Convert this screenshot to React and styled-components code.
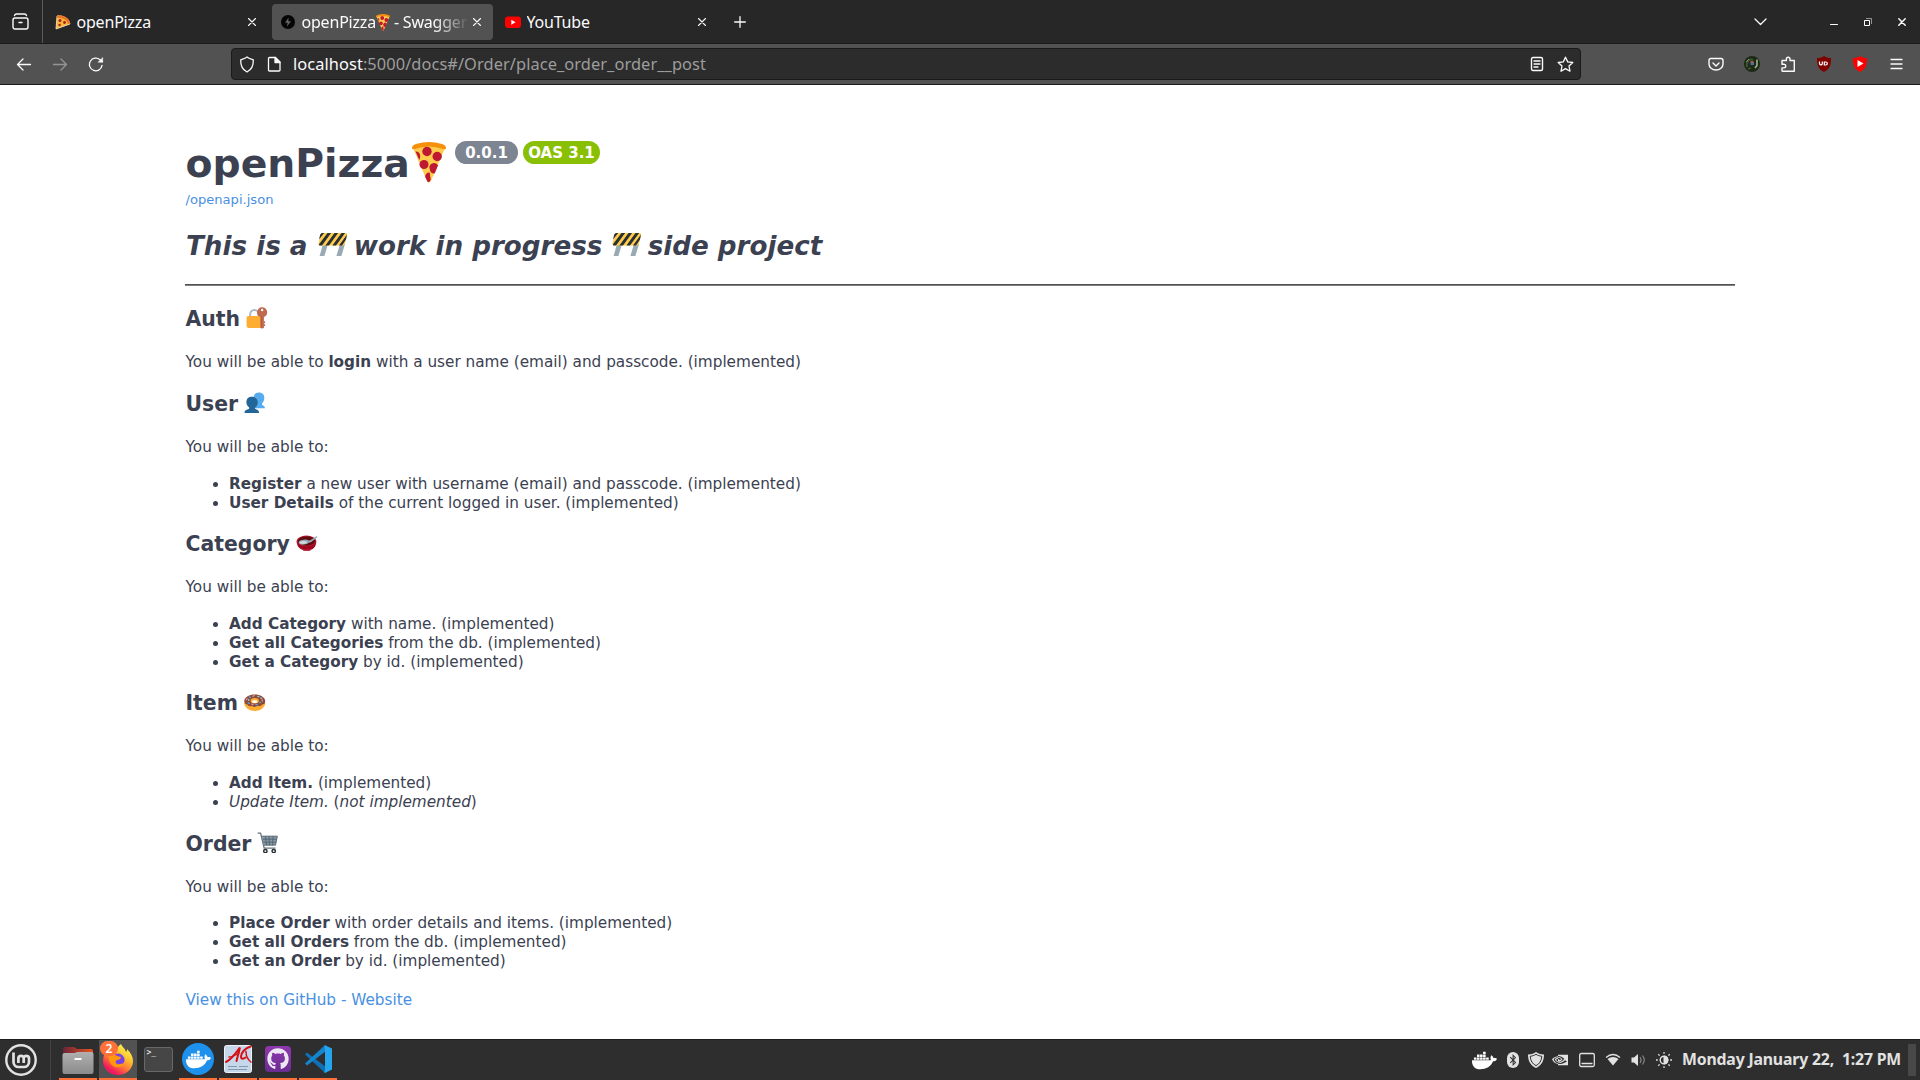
import React from "react";
import styled, { createGlobalStyle } from "styled-components";
import { FaDocker, FaGithub, FaBluetoothB } from "react-icons/fa";
import { SiNvidia } from "react-icons/si";

const Global = createGlobalStyle`
  *, *::before, *::after { box-sizing: border-box; }
  html, body { margin: 0; padding: 0; background: #fff; overflow: hidden; }
  svg { display: block; flex: none; }
`;

const uiFont = `"Noto Sans", "Open Sans", sans-serif`;

const Screen = styled.div`
  width: 1920px;
  height: 1080px;
  display: flex;
  flex-direction: column;
  background: #fff;
  overflow: hidden;
`;

/* ---------- Browser chrome ---------- */
const TabBar = styled.header`
  height: 44px;
  flex: none;
  display: flex;
  background: #272727;
  border-bottom: 1px solid #1b1b1b;
  color: #fbfbfe;
  font-family: ${uiFont};
`;

const ViewButton = styled.div`
  width: 43px;
  padding: 0 2px 0 0;
  border-right: 1px solid #5a5a5a;
  display: flex;
  align-items: center;
  justify-content: center;
  margin-right: 2px;
`;

const Tab = styled.div`
  width: 221px;
  height: 36px;
  margin: 4px 2px 0;
  padding: 0 8px;
  border-radius: 4px;
  display: flex;
  align-items: center;
  background: ${(p) => (p.$active ? "#525252" : "transparent")};
`;

const TabLabel = styled.span`
  flex: 1;
  margin-left: 5.5px;
  font-size: 16px;
  letter-spacing: -0.2px;
  line-height: 36px;
  white-space: pre;
  overflow: hidden;
  display: flex;
  align-items: center;
  ${(p) => p.$fade && "mask-image: linear-gradient(to right, #000 132px, transparent 168px);"}
`;

const CloseSlot = styled.span`
  width: 16px;
  display: flex;
  justify-content: center;
`;

const NewTab = styled.div`
  width: 39px;
  display: flex;
  align-items: center;
  justify-content: center;
`;

const WindowControls = styled.div`
  margin-left: auto;
  display: flex;
  align-items: center;
  padding-right: 1px;
`;

const ControlSlot = styled.div`
  width: 34px;
  margin-right: ${(p) => p.$after || 0}px;
  display: flex;
  justify-content: center;
`;

const NavBar = styled.nav`
  height: 41px;
  flex: none;
  display: flex;
  align-items: center;
  padding: 0 6px;
  background: #525252;
  border-bottom: 1px solid #1b1b1b;
  color: #fbfbfe;
`;

const NavButton = styled.div`
  width: 36px;
  display: flex;
  justify-content: center;
  opacity: ${(p) => (p.$dim ? 0.4 : 1)};
`;

const UrlBox = styled.div`
  width: 1350px;
  height: 32px;
  margin-left: 117px;
  margin-right: auto;
  padding: 0 1px 0 7px;
  display: flex;
  align-items: center;
  background: #2c2c2c;
  border: 1px solid #1a1a1a;
  border-radius: 4px;
`;

const UrlText = styled.span`
  flex: 1;
  margin-left: 5px;
  font-family: ${uiFont};
  font-size: 16.4px;
  letter-spacing: 0.07px;
  line-height: 30px;
  color: #9d9d9d;
  white-space: pre;
`;

const Host = styled.span`
  color: #fbfbfe;
`;

const UrlIcon = styled.span`
  width: 28px;
  margin-left: ${(p) => p.$left || 0}px;
  display: flex;
  justify-content: center;
`;

/* ---------- Document ---------- */
const Page = styled.main`
  flex: 1;
  padding: 53px 185px 0;
  font-family: "DejaVu Sans", sans-serif;
  font-size: 15.28px;
  color: #3b4151;
`;

const TextColumn = styled.div`
  padding-left: 0.5px;
`;

const TitleRow = styled.div`
  display: flex;
  align-items: flex-start;
  height: 53px;
`;

const Title = styled.h1`
  margin: 0;
  width: 225px;
  font-size: 39.3px;
  line-height: 52px;
  font-weight: 700;
`;

const TitleEmoji = styled.span`
  margin: 4px 9px 0 1.5px;
`;

const Badge = styled.span`
  height: 23px;
  width: ${(p) => p.$width}px;
  margin: 3px 5px 0 0;
  border-radius: 12px;
  background: ${(p) => p.$color};
  color: #fff;
  font-size: 15px;
  font-weight: 700;
  line-height: 24px;
  text-align: center;
  white-space: nowrap;
`;

const SpecLink = styled.a`
  display: block;
  font-size: 13.1px;
  line-height: 18px;
  color: #4990e2;
`;

const Tagline = styled.h2`
  margin: 21px 0 0;
  padding-left: 0.5px;
  height: 32px;
  display: flex;
  font-size: 26.2px;
  line-height: 32px;
  font-style: italic;
  font-weight: 700;
  white-space: pre;
`;

const TagEmoji = styled.span`
  margin: 3px -4px 0 ${(p) => p.$left}px;
`;

const Rule = styled.hr`
  margin: 22px 0 21px;
  height: 2px;
  border: 0;
  border-top: 1px solid #505050;
  border-bottom: 1px solid #808080;
`;

const SectionTitle = styled.h3`
  margin: 0 0 22px;
  height: 24px;
  display: flex;
  font-size: 20.4px;
  line-height: 24px;
  font-weight: 700;
  white-space: pre;

  svg { margin-left: -1px; }
`;

const Para = styled.p`
  margin: 0 0 ${(p) => (p.$list ? 17.5 : 20)}px;
  line-height: 19px;
`;

const List = styled.ul`
  margin: 0 0 19.7px;
  padding: 0 0 0 43.5px;
  line-height: 19px;
`;

const Footer = styled.a`
  display: block;
  line-height: 19px;
  margin-top: 1px;
  color: #4990e2;
`;

/* ---------- Desktop panel ---------- */
const Panel = styled.footer`
  height: 41px;
  flex: none;
  display: flex;
  align-items: stretch;
  background: #2e2e2e;
  border-top: 1px solid #1c1c1c;
  font-family: ${uiFont};
  color: #e2e2e2;
`;

const MenuSlot = styled.div`
  width: 51px;
  padding-left: 5px;
  margin-right: 8px;
  border-right: 1px solid #444;
  display: flex;
  align-items: center;
`;

const Task = styled.div`
  position: relative;
  width: 38px;
  margin-right: 2px;
  padding-top: ${(p) => (p.$low ? 2 : 0)}px;
  display: flex;
  align-items: center;
  justify-content: center;
  background: ${(p) => (p.$active ? "#525252" : "transparent")};
  border-bottom: 2px solid ${(p) => (p.$running ? "#ff7139" : "transparent")};
`;

const Count = styled.span`
  position: absolute;
  left: 1px;
  top: 1px;
  width: 18px;
  height: 15px;
  border-radius: 8px;
  background: #ff7139;
  color: #fff;
  font-size: 12px;
  font-weight: 600;
  line-height: 15px;
  text-align: center;
`;

const TerminalBox = styled.div`
  width: 29px;
  height: 25px;
  border-radius: 3px;
  border: 1px solid #686868;
  background: #464646;
  color: #fff;
  padding-left: 2px;
  font-family: "DejaVu Sans Mono", monospace;
  font-size: 8px;
  line-height: 10px;
`;

const Tray = styled.div`
  margin-left: auto;
  display: flex;
  align-items: center;
`;

const TraySlot = styled.span`
  width: ${(p) => p.$w}px;
  display: flex;
  justify-content: center;
`;

const Clock = styled.span`
  width: 218px;
  margin: 0 8px 0 5px;
  padding-bottom: 1px;
  text-align: right;
  font-size: 15.8px;
  font-weight: 700;
  letter-spacing: -0.17px;
  line-height: 37px;
  white-space: pre;
`;

const DesktopEdge = styled.span`
  width: 8px;
  height: 32px;
  margin-right: 4px;
  background: #484848;
`;

/* ---------- Drawings ---------- */
const Line = ({ w = 16, h = 16, box = "0 0 16 16", sw = 1.3, children }) => (
  <svg width={w} height={h} viewBox={box} fill="none" stroke="currentColor" strokeWidth={sw} strokeLinecap="round" strokeLinejoin="round">
    {children}
  </svg>
);

const CloseIcon = () => (
  <Line w={8} h={8} box="0 0 8 8" sw={1.1}><path d="M.5 .5l7 7M7.500 .5l-7 7" /></Line>
);

const PizzaEmoji = ({ w, h }) => (
  <svg width={w} height={h} viewBox="0 0 34 41">
    <path d="M1 6 Q17 0 33 6 L19 39 Q17 42 15 39Z" fill="#ffcc4d" />
    <g fill="#be1931">
      <circle cx="15" cy="9.500" r="4.700" />
      <circle cx="25.200" cy="14.500" r="4.700" />
      <circle cx="12" cy="22.500" r="4.500" />
      <path d="M3.500 9.500c4-.5 6 4 3.800 8.500zM26 23.500l-3.300 8a4.500 4.500 0 0 1-4.800-4 4.500 4.500 0 0 1 8.100-4zM13.200 35a4 4 0 0 1 4.500-4.500l1 7.500-1.500 2h-1.500z" />
    </g>
    <path d="M0 6 Q0 3 4 2 Q17-2 30 2 Q34 3 34 6 Q34 8 31 7 Q17 2 3 7 Q0 8 0 6Z" fill="#f4900c" />
  </svg>
);

const SliceFavicon = () => (
  <svg width="16" height="16" viewBox="0 0 16 16">
    <path d="M2 2C8 1 14 5 15 10L1 15Z" fill="#ffb636" stroke="#f7e8d0" strokeWidth=".8" />
    <path d="M2 1.500C8 0 15 4 15.200 9.500L13 10C12 6 8 3.400 2.200 4Z" fill="#e8762b" />
    <circle cx="5" cy="6.500" r="1.500" fill="#a3202a" />
    <circle cx="9.500" cy="8.500" r="1.400" fill="#a3202a" />
    <circle cx="4.600" cy="11" r="1.300" fill="#a3202a" />
  </svg>
);

const BarrierEmoji = () => (
  <svg width="31" height="26" viewBox="0 0 31 26">
    <path d="M5 11h5l-3.600 12H1.600zM22 11h5l-3.600 12H18.400z" fill="#9aaab4" />
    <path d="M4.100 0H27.500q2 0 1.500 2L27 10.500q-.5 2-2.500 2H2q-2 0-1.500-2L2.600 2q.5-2 1.500-2z" fill="#ffcc4d" />
    <g fill="#292f33">
      <path d="M3.800 0h2.400L1 6.500 2.200 1.500zM9.500 0h3.600L4 12.500H1.500L.8 11.500zM16.500 0h3.600L11 12.500H7.400zM23.500 0h3.600L18 12.500h-3.600zM29 1.500L28 6.500l-4 6h-3z" />
    </g>
  </svg>
);

const Emoji36 = ({ children }) => (
  <svg width="21.500" height="21.500" viewBox="0 0 36 36">{children}</svg>
);

const LockEmoji = () => (
  <Emoji36>
    <path d="M7 16v-4a7 7 0 0 1 14 0v4" fill="none" stroke="#aab8c2" strokeWidth="3.400" />
    <rect x="1" y="15" width="25" height="20" rx="3" fill="#ffac33" />
    <circle cx="27" cy="9" r="8.500" fill="#c1694f" />
    <path d="M24 15h6v20l-3 1-3-1z" fill="#c1694f" />
    <path d="M30 24h2v3h-2zM30 29h2v3h-2z" fill="#c1694f" />
    <path d="M25 16h1v18h-1z" fill="#a34f3b" />
    <circle cx="27" cy="5" r="2" fill="#fff" />
  </Emoji36>
);

const UsersEmoji = () => (
  <Emoji36>
    <path d="M15 27c1-4 6-2 6-6-5-4-6-10-4-15 1-4 5-5 8-5 6 0 9 4 9 9 0 4-2 7-4 10 0 3 5 2 5 7z" fill="#55acee" />
    <path d="M1 35c-1-6 6-5 8-8 0-2-5-4-5-10 0-6 4-9 9-9s10 3 10 9c0 6-4 8-5 10 2 3 8 2 7 8z" fill="#226699" />
  </Emoji36>
);

const BowlEmoji = () => (
  <Emoji36>
    <path d="M1 15c0 9 6 16 17 16s16-7 16-16z" fill="#a0041e" />
    <path d="M12 29h12v2.500H12z" fill="#be1931" />
    <ellipse cx="17.500" cy="15" rx="16.500" ry="9" fill="#be1931" />
    <ellipse cx="17.500" cy="15" rx="14.500" ry="7.500" fill="#5c0d12" />
    <ellipse cx="13" cy="17" rx="8.500" ry="4" fill="#99aab5" transform="rotate(-8 13 17)" />
    <path d="M15 15l9-1 11-7.500 1 2-11 8.500-9 2z" fill="#99aab5" />
    <ellipse cx="12" cy="17.500" rx="6" ry="2.400" fill="#ccd6dd" />
  </Emoji36>
);

const DonutEmoji = () => (
  <Emoji36>
    <g transform="translate(0 .8)">
      <ellipse cx="18" cy="20" rx="17.500" ry="12.500" fill="#ffac33" />
      <path d="M.5 16C1 9 9 5 18 5s17 4 17.500 11c0 4-2 6-5 6-2 3-6 3-8 2-3 3-8 2-10 0-3 2-6 0-7-2-3 0-5-3-5-6z" fill="#8a4b38" />
      <ellipse cx="18" cy="15.500" rx="7" ry="4.500" fill="#ffac33" />
      <ellipse cx="18" cy="17" rx="4.500" ry="2.400" fill="#fff" />
      <g strokeWidth="2" strokeLinecap="round">
        <path d="M9 9l2 1M26 19l2-1M7 19l2 1M20 22l2 0" stroke="#55acee" />
        <path d="M15 8l2-1M30 14l1 2M4 14l1-2M13 21l2 1" stroke="#ea99ad" />
        <path d="M23 8l2 1M28 11l2 0M8 15l0-2" stroke="#9ccde8" />
      </g>
    </g>
  </Emoji36>
);

const CartEmoji = () => (
  <Emoji36>
    <path d="M1 2h5l6 25h19" fill="none" stroke="#66757f" strokeWidth="2.200" />
    <path d="M8 7h26l-3 15H12z" fill="#8899a6" />
    <path d="M8 7h26M9 12h24M10 17h22M12 22h19M14 7l2 15M20 7l1 15M27 7l-1 15M34 7l-3 15" stroke="#536470" strokeWidth="1.600" />
    <circle cx="14" cy="32" r="2.800" fill="#fff" stroke="#292f33" strokeWidth="2.400" />
    <circle cx="28" cy="32" r="2.800" fill="#fff" stroke="#292f33" strokeWidth="2.400" />
  </Emoji36>
);

const MintLogo = () => (
  <svg width="32" height="32" viewBox="0 0 32 32" fill="none" stroke="#e2e2e2">
    <circle cx="16" cy="16" r="14.700" strokeWidth="2.400" />
    <path d="M8.500 8.500v9.500a5 5 0 0 0 5 5h5.500a5 5 0 0 0 5-5v-4a2.700 2.700 0 0 0-5.300 0v5M18.700 14a2.700 2.700 0 0 0-5.300 0v5" strokeWidth="2.700" />
  </svg>
);

const FolderIcon = () => (
  <svg width="32" height="28" viewBox="0 0 32 28">
    <defs>
      <linearGradient id="folderBack"><stop offset="0" stopColor="#6b2438" /><stop offset="1" stopColor="#e95420" /></linearGradient>
      <linearGradient id="folderFront" x2="0" y2="1"><stop offset="0" stopColor="#b0b0b0" /><stop offset="1" stopColor="#8b8b8b" /></linearGradient>
    </defs>
    <path d="M1 3q0-2 2-2h9l3 2h14q2 0 2 2v10H1z" fill="url(#folderBack)" />
    <path d="M.5 9q0-2 2-2H13l2-1h14.500q2 0 2 2v18q0 2-2 2h-27q-2 0-2-2z" fill="url(#folderFront)" />
    <path d="M12.500 13h7" stroke="#fff" strokeWidth="2" />
  </svg>
);

const FirefoxIcon = () => (
  <svg width="32" height="32" viewBox="0 0 32 32">
    <defs>
      <linearGradient id="fox" x1=".8" y1=".1" x2=".2" y2="1">
        <stop offset="0" stopColor="#fff44f" /><stop offset=".3" stopColor="#ffbd2f" />
        <stop offset=".58" stopColor="#ff7139" /><stop offset=".85" stopColor="#f0195f" />
      </linearGradient>
    </defs>
    <path d="M19 1c1 3 4 4 5 8 1-1 1-2 1-3 4 4 6 8 6 12A15 14 0 0 1 1 18c0-5 2-9 4-11l1 3c3-2 6-2 8-1 0-3 2-6 5-8z" fill="url(#fox)" />
    <circle cx="16" cy="17" r="6.500" fill="#7542e5" />
    <path d="M7 12c3-2 6-1 8 1l4 1c0 2-2 3-4 3-2 1-2 3 0 4 3 1 5-1 8-1-2 4-6 5-10 4-5-2-7-7-6-12z" fill="#ff980e" />
    <path d="M16 8c5 0 8 4 8 9 2-3 1-7-1-9-2-1-4-2-4-4-1 1-3 2-3 4z" fill="#ffd83c" />
  </svg>
);

const Disc = styled.div`
  width: 32px;
  height: 32px;
  border-radius: 16px;
  background: #1d91ec;
  display: flex;
  align-items: center;
  justify-content: center;
`;

const GithubTile = styled.div`
  width: 26px;
  height: 26px;
  border-radius: 4px;
  background: linear-gradient(#9038ae, #6a2c91);
  display: flex;
  align-items: center;
  justify-content: center;
`;

const BluetoothPill = styled.div`
  width: 12px;
  height: 16px;
  border-radius: 6px;
  background: #e2e2e2;
  display: flex;
  align-items: center;
  justify-content: center;
`;

const EditorIcon = () => (
  <svg width="28" height="28" viewBox="0 0 28 28">
    <rect x=".5" y=".5" width="27" height="27" rx="2" fill="#c5d7e8" stroke="#eef3f8" />
    <path d="M4 21.500h9M4 24.500h19M15 21.500h9" stroke="#8199b2" strokeWidth="1.100" />
    <g fill="none" stroke="#d80d14" strokeLinecap="round">
      <path d="M2 17C7 15 12 8 16 2.500L12.500 16" strokeWidth="2" />
      <path d="M5 12C9 12 12 10 15 8" strokeWidth="1.500" />
      <path d="M26.500 1.500C21 3 17 8 17 11.500c0 3 2.500 2.500 4.500 1" strokeWidth="2" />
      <path d="M22 6.500c0 4 1.500 8 5 10.500" strokeWidth="1.500" />
    </g>
  </svg>
);

const CodeIcon = () => (
  <svg width="28" height="28" viewBox="0 0 28 28">
    <path d="M1 9.500L3 7.500 22 22v5.500L20 27z" fill="#0f70b3" />
    <path d="M1 18.500L3 20.500 22 6V.5L20 1z" fill="#1485cf" />
    <path d="M20 1l1-.8L28 3.500v21L21 28l-1-1 1-1V2z" fill="#25a5ee" />
  </svg>
);

const Shield = ({ fill, children }) => (
  <svg width="16" height="16" viewBox="0 0 16 16">
    <path d="M8 0c2 1.500 4 2 7 2 0 7-1 11-7 14C2 13 1 9 1 2c3 0 5-.5 7-2z" fill={fill} />
    {children}
  </svg>
);

const AvatarIcon = () => (
  <svg width="16" height="16" viewBox="0 0 16 16">
    <circle cx="8" cy="8" r="8" fill="#1c2914" />
    <path d="M3 11C2 5 6 2 9 4M4 13l3-1" fill="none" stroke="#3f5a34" strokeWidth="1.800" />
    <path d="M11 12l2-2.500V3.500" fill="none" stroke="#a6b999" strokeWidth="1.500" />
    <path d="M2 6l3-3" stroke="#7c9170" />
    <path d="M6.500 6h3.500v3H6.500z" fill="#526da1" />
    <path d="M6.500 5h3v1.500h-3z" fill="#b5533c" />
  </svg>
);

const sections = [
  {
    name: "User",
    emoji: <UsersEmoji />,
    items: [
      [<b>Register</b>, " a new user with username (email) and passcode. (implemented)"],
      [<b>User Details</b>, " of the current logged in user. (implemented)"],
    ],
  },
  {
    name: "Category",
    emoji: <BowlEmoji />,
    items: [
      [<b>Add Category</b>, " with name. (implemented)"],
      [<b>Get all Categories</b>, " from the db. (implemented)"],
      [<b>Get a Category</b>, " by id. (implemented)"],
    ],
  },
  {
    name: "Item",
    emoji: <DonutEmoji />,
    items: [
      [<b>Add Item.</b>, " (implemented)"],
      [<i>Update Item.</i>, <> (<i>not implemented</i>)</>],
    ],
  },
  {
    name: "Order",
    emoji: <CartEmoji />,
    items: [
      [<b>Place Order</b>, " with order details and items. (implemented)"],
      [<b>Get all Orders</b>, " from the db. (implemented)"],
      [<b>Get an Order</b>, " by id. (implemented)"],
    ],
  },
];

export default function App() {
  return (
    <Screen>
      <Global />
      <TabBar>
        <ViewButton>
          <Line w={17} h={17} box="0 0 17 17" sw={1.4}>
            <rect x="1" y="5" width="15" height="11" rx="2" />
            <path d="M2.500 2.500q.5-1.500 2-1.500h8q1.500 0 2 1.500M7 9.500h3" />
          </Line>
        </ViewButton>
        <Tab>
          <SliceFavicon />
          <TabLabel>openPizza</TabLabel>
          <CloseSlot><CloseIcon /></CloseSlot>
        </Tab>
        <Tab $active>
          <svg width="16" height="16" viewBox="0 0 16 16">
            <circle cx="8" cy="8" r="7" fill="#050505" />
            <path d="M8.600 3.500L5 8.800h2.600L7 12.500l4-5.300H8.300z" fill="#666" />
          </svg>
          <TabLabel $fade>openPizza<PizzaEmoji w={14} h={17} /> - Swagger</TabLabel>
          <CloseSlot><CloseIcon /></CloseSlot>
        </Tab>
        <Tab>
          <svg width="16" height="16" viewBox="0 0 16 16">
            <rect y="2.500" width="16" height="11.500" rx="3" fill="#f00" />
            <path d="M6.300 5.800v5l4.300-2.500z" fill="#fff" />
          </svg>
          <TabLabel>YouTube</TabLabel>
          <CloseSlot><CloseIcon /></CloseSlot>
        </Tab>
        <NewTab>
          <Line w={12} h={12} box="0 0 12 12"><path d="M6 .7v10.600M.7 6h10.600" /></Line>
        </NewTab>
        <WindowControls>
          <ControlSlot $after={40}>
            <Line w={13} h={8} box="0 0 13 8"><path d="M1 1l5.500 5.500L12 1" /></Line>
          </ControlSlot>
          <ControlSlot>
            <Line w={8} h={8} box="0 0 8 8" sw={1}><path d="M.5 6.500h7" /></Line>
          </ControlSlot>
          <ControlSlot>
            <svg width="8" height="8" viewBox="0 0 8 8" fill="none" stroke="#fff">
              <path d="M.5 2.500h5v5h-5z" /><path d="M2 .5h5.500V6" opacity=".5" />
            </svg>
          </ControlSlot>
          <ControlSlot><Line w={8} h={8} box="0 0 8 8" sw={1.5}><path d="M.8 .8l6.400 6.400M7.200 .8L.8 7.200" /></Line></ControlSlot>
        </WindowControls>
      </TabBar>

      <NavBar>
        <NavButton><Line><path d="M14.500 8.500H1.500M7 3L1.500 8.500 7 14" /></Line></NavButton>
        <NavButton $dim><Line><path d="M1.500 8.500h13M9 3l5.500 5.500L9 14" /></Line></NavButton>
        <NavButton>
          <Line>
            <path d="M14 9.300A6.300 6.300 0 1 1 12 3.800l2.300 2" />
            <path d="M14.700 1.800v4.400h-4.400z" fill="currentColor" strokeWidth=".5" />
          </Line>
        </NavButton>
        <UrlBox>
          <Line w={16} h={17} box="0 0 16 17"><path d="M8 1c2 1.600 4 2 6.300 2.800C14.500 9 13 13.500 8 16 3 13.500 1.500 9 1.700 3.800 4 3 6 2.600 8 1z" /></Line>
          <UrlIcon $left={5}>
            <Line><path d="M3.500 1.500h6L14 6v8q0 1-1 1H3.500q-1 0-1-1V2.500q0-1 1-1z" /><path d="M9 1.500L14 6.500H9z" fill="currentColor" /></Line>
          </UrlIcon>
          <UrlText><Host>localhost</Host>:5000/docs#/Order/place_order_order__post</UrlText>
          <UrlIcon>
            <Line w={14} h={16} box="0 0 14 16" sw={1.4}><rect x="1.500" y="1.500" width="11" height="13" rx="1.500" /><path d="M4 5h6M4 8h6M4 11h4" /></Line>
          </UrlIcon>
          <UrlIcon>
            <Line w={17} h={17} box="0 0 17 17"><path d="M8.500 1.200l2.200 4.700 5.100.6-3.800 3.500 1 5.200-4.500-2.600L4 15.200 5 10 1.200 6.500l5.100-.6z" /></Line>
          </UrlIcon>
        </UrlBox>
        <NavButton>
          <Line sw={1.4}><path d="M3 2.500h10q2 0 2 2V8A7 6 0 0 1 1 8V4.500q0-2 2-2zM5 7l3 3 3-3" /></Line>
        </NavButton>
        <NavButton><AvatarIcon /></NavButton>
        <NavButton>
          <Line sw={1.4}><path d="M2.500 15.300h11.800V4.500H10V3a1.800 1.800 0 0 0-3.600 0v1.500H2v3.800h2a1.800 1.800 0 0 1 0 3.600H2v3z" /></Line>
        </NavButton>
        <NavButton>
          <Shield fill="#800000">
            <path d="M3.500 5.500v2a1.400 1.400 0 0 0 2.800 0v-2" fill="none" stroke="#fff" strokeWidth="1.200" />
            <path d="M8.300 6v3h1.500a1.500 1.500 0 0 0 0-3z" fill="none" stroke="#fff" strokeWidth="1.200" />
          </Shield>
        </NavButton>
        <NavButton><Shield fill="#f00"><path d="M5.500 4v7l6-3.500z" fill="#fff" /></Shield></NavButton>
        <NavButton><Line w={13} h={12} box="0 0 13 12"><path d="M1 1.500h11M1 6h11M1 10.500h11" /></Line></NavButton>
      </NavBar>

      <Page>
        <TextColumn>
          <TitleRow>
            <Title>openPizza</Title>
            <TitleEmoji><PizzaEmoji w={34} h={41} /></TitleEmoji>
            <Badge $width={63} $color="#7d8492">0.0.1</Badge>
            <Badge $width={77} $color="#89bf04">OAS 3.1</Badge>
          </TitleRow>
          <SpecLink>/openapi.json</SpecLink>
          <Tagline>
            {"This is a "}
            <TagEmoji $left={1}><BarrierEmoji /></TagEmoji>
            {" work in progress "}
            <TagEmoji $left={0}><BarrierEmoji /></TagEmoji>
            {" side project"}
          </Tagline>
        </TextColumn>
        <Rule />
        <TextColumn>
          <SectionTitle>{"Auth "}<LockEmoji /></SectionTitle>
          <Para>You will be able to <b>login</b> with a user name (email) and passcode. (implemented)</Para>
          {sections.map((s) => (
            <React.Fragment key={s.name}>
              <SectionTitle>{s.name + " "}{s.emoji}</SectionTitle>
              <Para $list>You will be able to:</Para>
              <List>
                {s.items.map(([lead, rest], i) => (
                  <li key={i}>{lead}{rest}</li>
                ))}
              </List>
            </React.Fragment>
          ))}
          <Footer>View this on GitHub - Website</Footer>
        </TextColumn>
      </Page>

      <Panel>
        <MenuSlot><MintLogo /></MenuSlot>
        <Task $running $low><FolderIcon /></Task>
        <Task $running $active><FirefoxIcon /><Count>2</Count></Task>
        <Task><TerminalBox>&gt;_</TerminalBox></Task>
        <Task $running><Disc><FaDocker size={25} color="#fff" /></Disc></Task>
        <Task $running><EditorIcon /></Task>
        <Task $running><GithubTile><FaGithub size={22} color="#efe6f3" /></GithubTile></Task>
        <Task $running><CodeIcon /></Task>
        <Tray>
          <TraySlot $w={30}><FaDocker size={25} color="#fff" /></TraySlot>
          <TraySlot $w={27}><BluetoothPill><FaBluetoothB size={12} color="#2e2e2e" /></BluetoothPill></TraySlot>
          <TraySlot $w={20}>
            <svg width="16" height="16" viewBox="0 0 16 16" fill="none">
              <path d="M8 0c2 1.500 4 2.500 8 2.500C16 9 13.500 13.500 8 16 2.500 13.500 0 9 0 2.500 4 2.500 6 1.500 8 0z" fill="#e2e2e2" />
              <path d="M8 2.300c2 1.200 3.500 1.700 5.800 2C13.500 9 11.500 11.800 8 13.700 4.500 11.800 2.500 9 2.200 4.300 4.500 4 6 3.500 8 2.300z" stroke="#2e2e2e" />
            </svg>
          </TraySlot>
          <TraySlot $w={27}><SiNvidia size={16} /></TraySlot>
          <TraySlot $w={27}>
            <Line><rect x=".7" y="1.500" width="14.600" height="13" rx="1.500" /><path d="M3 11.500h10" /></Line>
          </TraySlot>
          <TraySlot $w={25}>
            <svg width="16" height="14" viewBox="0 0 16 14"><path d="M1 4.500Q8-1.500 15 4.500" fill="none" stroke="#e2e2e2" strokeWidth="1.300" /><path d="M2.500 6Q8 2 13.500 6L8 12.500z" fill="#e2e2e2" /></svg>
          </TraySlot>
          <TraySlot $w={26}>
            <svg width="16" height="16" viewBox="0 0 16 16"><path d="M1.500 5.500h2.500L8 2v12L4 10.500H1.500z" fill="#e2e2e2" /><path d="M10 5q2 3 0 6M12.500 3.500q3.500 4.500 0 9" fill="none" stroke="#888" strokeWidth="1.200" /></svg>
          </TraySlot>
          <TraySlot $w={26}>
            <svg width="16" height="16" viewBox="0 0 16 16" fill="none" stroke="#e2e2e2">
              <circle cx="8" cy="8" r="3.800" strokeWidth="1.400" /><path d="M8 4a4 4 0 0 1 0 8z" fill="#e2e2e2" />
              <path d="M8 0v1.800M8 14.200V16M0 8h1.800M14.200 8H16M2.300 2.300l1.300 1.300M12.400 12.400l1.300 1.300M2.300 13.700l1.300-1.300M12.400 3.600l1.300-1.300" strokeWidth="1.300" />
            </svg>
          </TraySlot>
          <Clock>{"Monday January 22,  1:27 PM"}</Clock>
          <DesktopEdge />
        </Tray>
      </Panel>
    </Screen>
  );
}
